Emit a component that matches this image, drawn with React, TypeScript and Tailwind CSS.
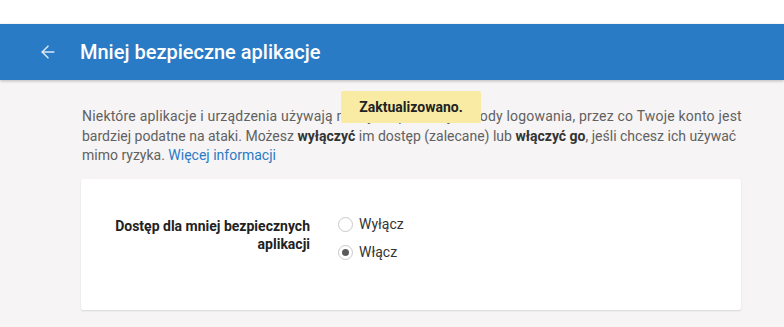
import {ArrowLeft} from "lucide-react";

const Radio = ({checked, label}: {checked?: boolean, label: string}) => (
    <label className="flex items-center gap-[6px] h-[28px]">
        <span className="w-[15px] h-[15px] rounded-full border border-[#c9c9c9] bg-white flex items-center justify-center">
            {checked && <span className="w-[7px] h-[7px] rounded-full bg-[#5a5a5a]"/>}
        </span>
        <span className="text-[14px] text-[#333]">{label}</span>
    </label>
);

export default function App() {
    return (
        <div className="w-[784px] h-[327px] overflow-hidden bg-white font-['Roboto',_'Liberation_Sans',_sans-serif] relative">
            <div className="h-[24px] bg-white"/>
            {/* pasek tytułu */}
            <header className="h-[56px] bg-[#2a7bc5] flex items-center shadow-[0_1px_3px_rgba(0,0,0,0.25)] relative z-10">
                <ArrowLeft className="ml-[38px] w-[20px] h-[20px] text-[#dce9f6]" strokeWidth={1.8}/>
                <h1 className="ml-[22px] text-[20px] text-white font-medium">Mniej bezpieczne aplikacje</h1>
            </header>

            <main className="bg-[#f6f4f5] h-[247px] pl-[82px] pt-[27px]">
                <p className="text-[14px] leading-[19.5px] text-[#616161]">
                    <span className="tracking-[0.2px]">Niektóre aplikacje i urządzenia używają mniej bezpiecznej metody logowania, przez co Twoje konto jest</span><br/>
                    bardziej podatne na ataki. Możesz <b className="text-[#333]">wyłączyć</b> im dostęp (zalecane) lub <b className="text-[#333]">włączyć go</b>, jeśli chcesz ich używać<br/>
                    mimo ryzyka. <a className="text-[#2a7bc5]">Więcej informacji</a>
                </p>

                <div className="mt-[13px] -ml-[1px] w-[660px] h-[131px] bg-white rounded-[2px] shadow-[0_1px_2px_rgba(0,0,0,0.12)] flex pt-[38px]">
                    <div className="w-[229px] text-right text-[14px] leading-[18px] font-bold text-[#222]">
                        Dostęp dla mniej bezpiecznych<br/>aplikacji
                    </div>
                    <div className="ml-[28px] -mt-[6px] flex flex-col">
                        <Radio label="Wyłącz"/>
                        <Radio checked label="Włącz"/>
                    </div>
                </div>
            </main>

            {/* komunikat */}
            <div className="absolute left-[341px] top-[91px] w-[140px] h-[32px] bg-[#f9eba4] flex items-center justify-center text-[14px] font-bold text-[#222] rounded-[2px]">
                Zaktualizowano.
            </div>
        </div>
    );
}
